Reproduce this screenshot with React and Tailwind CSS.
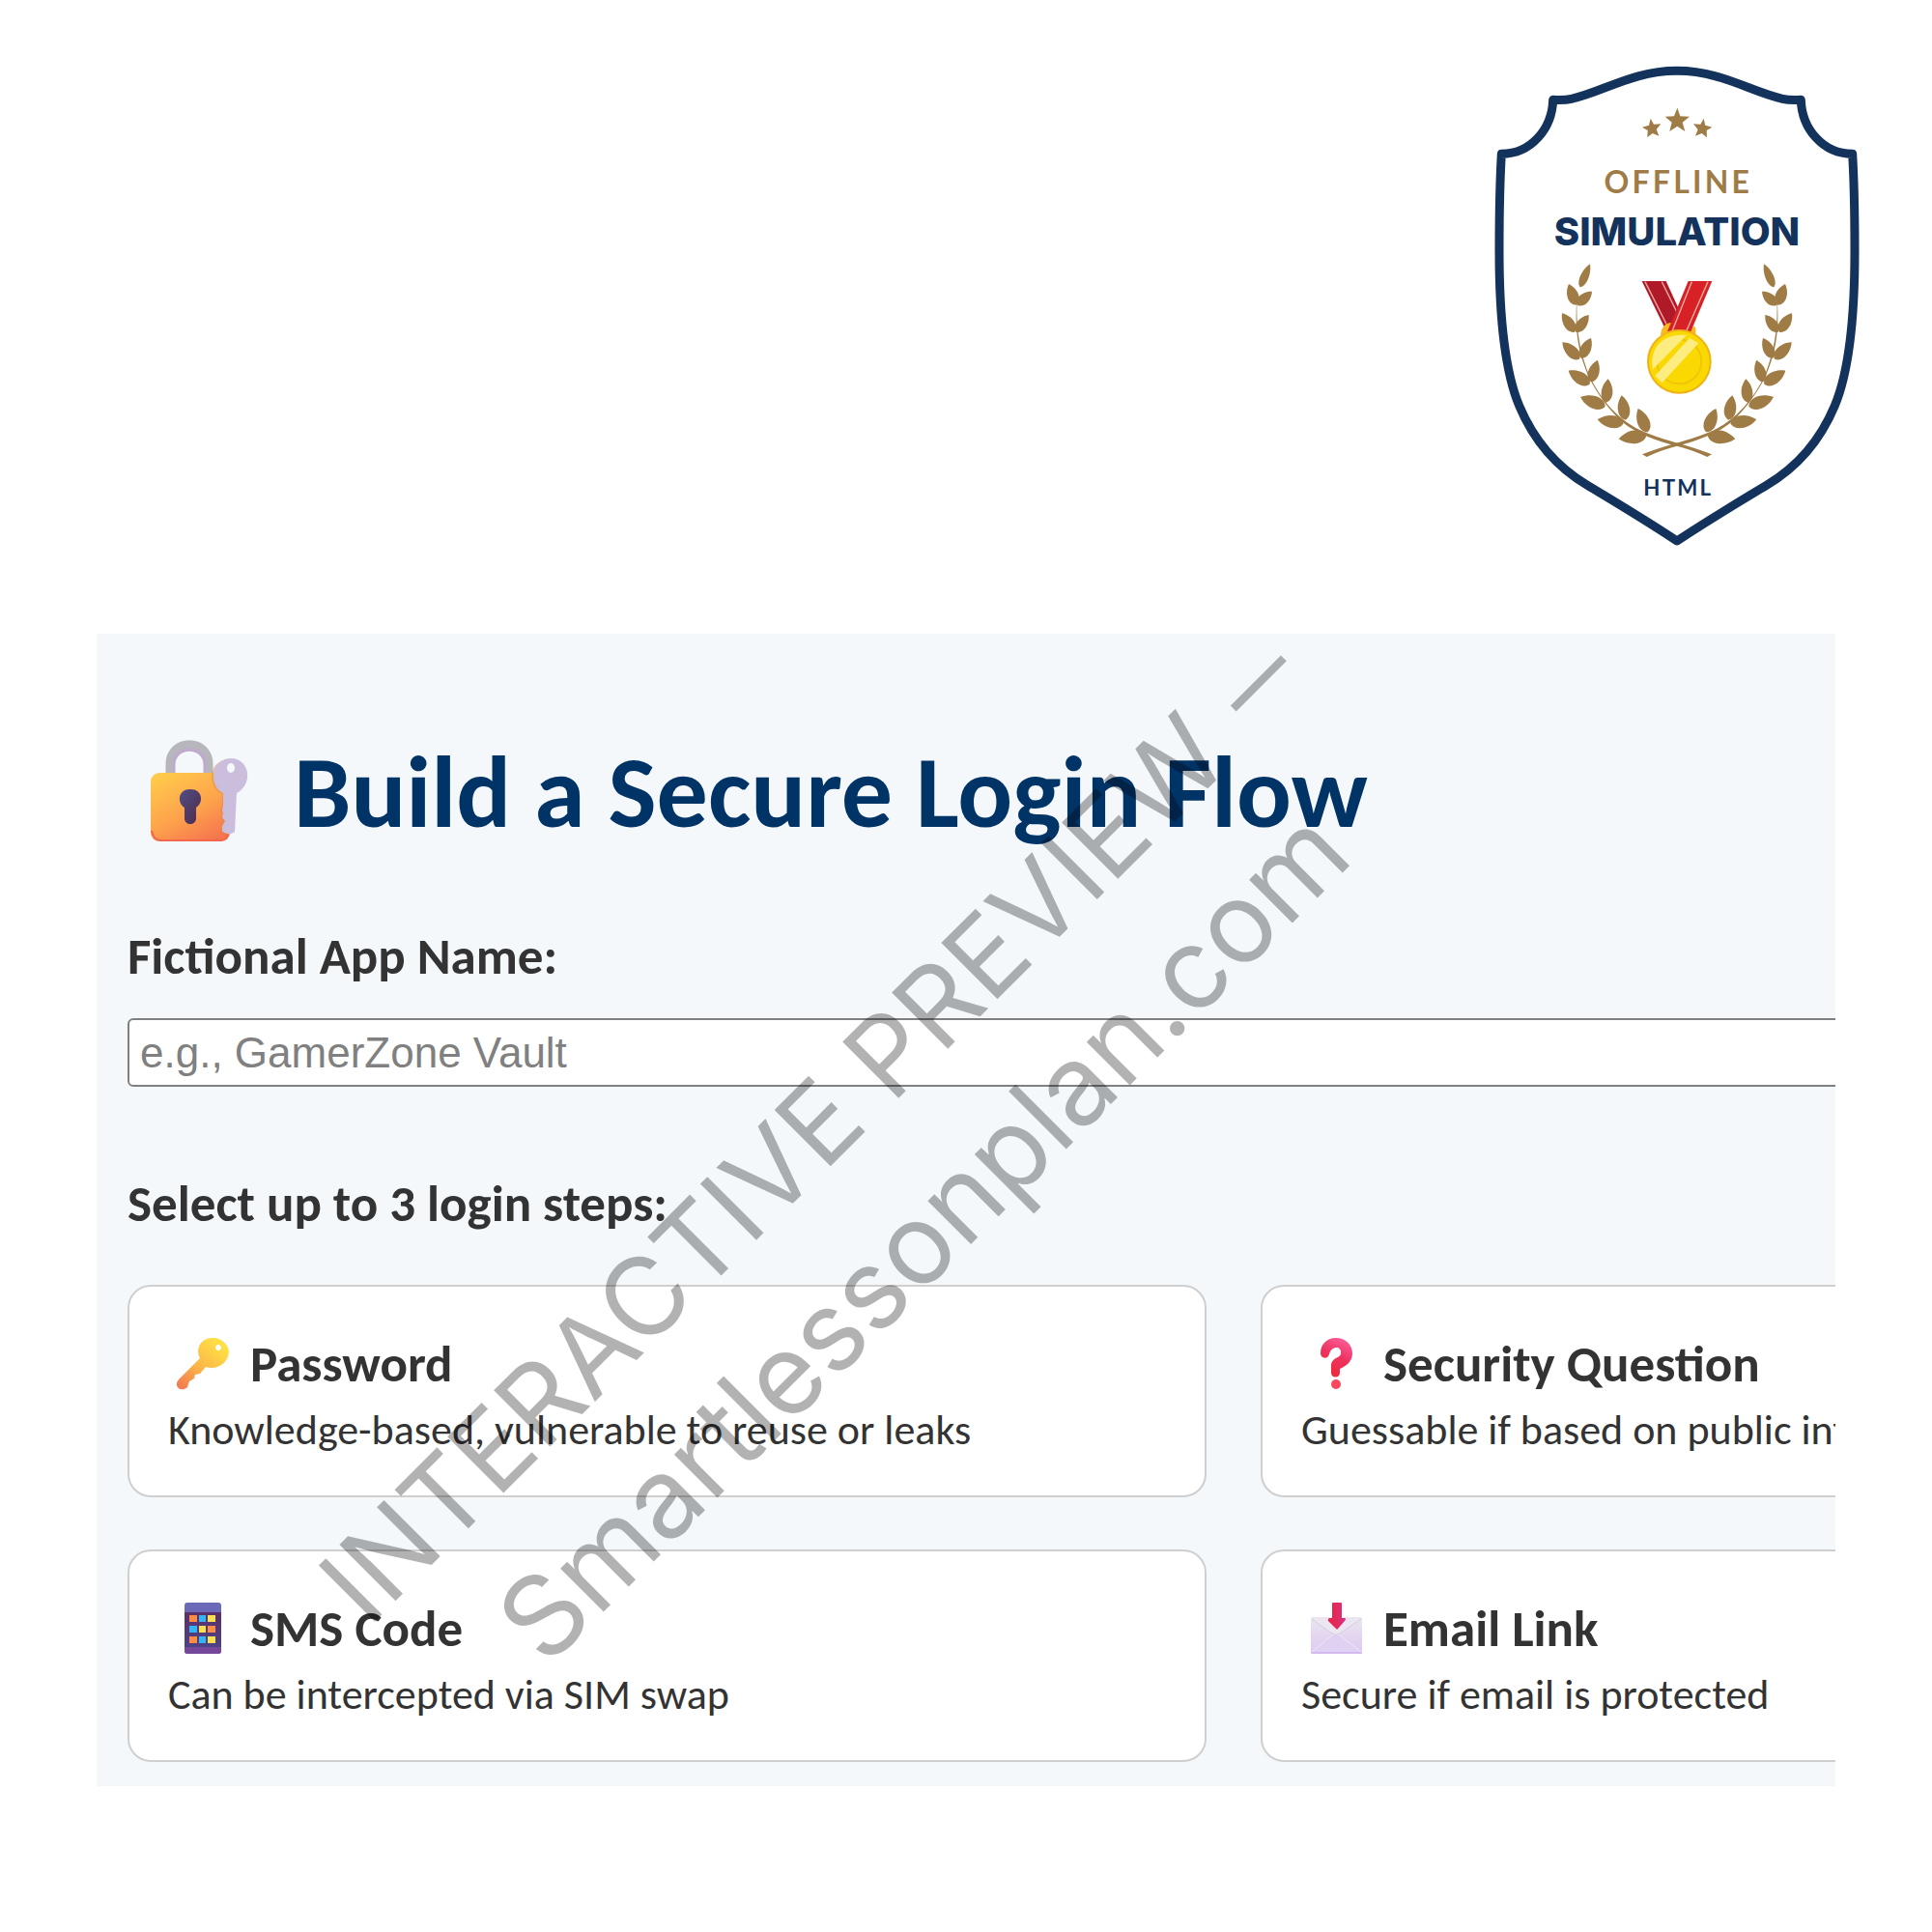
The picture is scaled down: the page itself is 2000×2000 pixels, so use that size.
// Stem point, tip and how far the sides bulge
const leaves = [
  [317, 112, 348, 40, 0.22],
  [305, 167, 282, 102, 0.34],
  [308, 167, 354, 125, 0.34],
  [300, 251, 261, 193, 0.32],
  [304, 251, 344, 198, 0.32],
  [315, 335, 262, 283, 0.32],
  [320, 332, 351, 270, 0.32],
  [347, 413, 281, 371, 0.32],
  [350, 406, 371, 338, 0.32],
  [395, 482, 318, 453, 0.32],
  [398, 470, 404, 397, 0.32],
  [452, 535, 371, 523, 0.32],
  [458, 524, 446, 448, 0.32],
  [523, 572, 437, 583, 0.32],
  [527, 562, 497, 489, 0.32],
];

const leafPath = ([bx, by, tx, ty, bulge]) => {
  const dx = tx - bx;
  const dy = ty - by;
  const point = (along, side) =>
    `${bx + dx * along - dy * side} ${by + dy * along + dx * side}`;
  return `M${bx} ${by} C${point(0.12, bulge)} ${point(0.65, bulge)} ${tx} ${ty} C${point(0.65, -bulge)} ${point(0.12, -bulge)} ${bx} ${by}Z`;
};

const Branch = () => (
  <g fill="#9f7b45">
    {leaves.map((leaf) => (
      <path key={leaf.join("-")} d={leafPath(leaf)} />
    ))}
    <path d="M309 120 C305 200 304 280 345 385 C390 480 455 540 530 567 C560 578 590 588 620 596 C655 606 690 617 726 631 L712 639 C680 624 650 613 618 605 C580 596 500 572 452 533 C395 485 350 410 334 366 C300 280 302 200 309 120Z" />
  </g>
);

const Badge = () => (
  <svg viewBox="0 0 1260 1590" className="w-[420px] h-[530px]" role="img" aria-label="Offline simulation badge">
    <path
      d="M618 70 C480 70 390 135 290 157 C270 162 250 161 233 160 C230 250 165 328 73 328 C67 430 66 520 66 630 C66 820 82 1000 128 1110 C170 1210 240 1298 340 1357 C430 1411 525 1468 618 1530 C711 1468 806 1411 896 1357 C996 1298 1066 1210 1108 1110 C1154 1000 1170 820 1170 630 C1170 520 1169 430 1163 328 C1071 328 1006 250 1003 160 C986 161 966 162 946 157 C846 135 756 70 618 70Z"
      fill="#fff"
      stroke="#13335c"
      strokeWidth="27"
      strokeLinejoin="round"
    />
    <g fill="#9f7b45">
      <path d="M619 185 L628 211 L657 212 L635 230 L643 258 L619 242 L595 258 L602 230 L581 212 L609 211Z" />
      <path d="M536 218 L546 236 L568 235 L554 252 L562 272 L542 264 L526 277 L527 255 L510 245 L531 239Z" />
      <path d="M701 218 L691 236 L669 235 L683 252 L675 272 L695 264 L711 277 L710 255 L727 245 L706 239Z" />
    </g>
    <text x="622" y="449" textAnchor="middle" fontSize="96" className="font-['Lato',sans-serif] font-bold tracking-widest fill-[#9f7b45]">
      OFFLINE
    </text>
    <text x="618" y="612" textAnchor="middle" fontSize="120" className="font-['Inter',sans-serif] font-extrabold fill-[#13335c]">
      SIMULATION
    </text>
    <g transform="translate(0 630)">
      <Branch />
      <g transform="translate(1236 0) scale(-1 1)">
        <Branch />
      </g>

      {/* Medal */}
      <path d="M509 93 L584 93 L640 215 L600 250 L579 236Z" fill="#b01928" />
      <path d="M519 95 L585 226 M571 95 L618 190" stroke="#e8a9a0" strokeWidth="4" />
      <path d="M567 262 C568 236 585 220 604 222 L598 236 L590 250Z M672 232 C678 242 677 254 675 264 L655 250Z" fill="#fbb91c" />
      <path d="M653 93 L727 93 L660 252 L588 250Z" fill="#d82127" />
      <path d="M664 95 L604 246 M714 95 L648 246" stroke="#f3b3a2" strokeWidth="4" />
      <circle cx="625" cy="343" r="97" fill="#fad802" stroke="#efb317" strokeWidth="6" />
      <circle cx="625" cy="343" r="69" fill="none" stroke="#f1c40c" strokeWidth="6" />
      <path d="M543 367 C531 306 570 252 648 261Z" fill="#fdf08f" opacity="0.9" />
      <path d="M657 270 L685 286 L572 409 L550 387Z" fill="#fdf08f" opacity="0.9" />
    </g>
    <text x="622" y="1389" textAnchor="middle" fontSize="67" className="font-['Lato',sans-serif] font-bold tracking-widest fill-[#13335c]">
      HTML
    </text>
  </svg>
);

const LockIcon = () => (
  <svg viewBox="0 0 136 136" className="w-[136px] h-[136px] shrink-0" aria-hidden="true">
    <defs>
      <linearGradient id="lockBody" x1="0.2" y1="0" x2="0.8" y2="1">
        <stop offset="0" stopColor="#ffc94b" />
        <stop offset="0.55" stopColor="#fda24c" />
        <stop offset="1" stopColor="#f5734f" />
      </linearGradient>
      <linearGradient id="lockHole" x1="0" y1="0" x2="1" y2="1">
        <stop offset="0" stopColor="#514e84" />
        <stop offset="1" stopColor="#4e2b4d" />
      </linearGradient>
    </defs>
    <path d="M44 50 V39 C44 12 84 12 84 39 V50" fill="none" stroke="#b7b6bc" strokeWidth="9" />
    <path d="M48 50 V40 C48 19 80 19 80 40 V50" fill="none" stroke="#c0a9cf" strokeWidth="3" />
    <rect x="24" y="48" width="82" height="71" rx="9" fill="url(#lockBody)" />
    <path d="M25 108 Q27 118 34 118 H95 Q102 118 104 112" fill="none" stroke="#f4674f" strokeWidth="2" />
    <path d="M65 65 C52 65 51 79 59 84 V95 C59 103 71 103 71 95 V84 C79 79 78 65 65 65Z" fill="url(#lockHole)" />
    <path
      d="M105 34 C82 35 83 64 98 70 V82 L96 86 L98 90 L96 94 L99 98 L96 103 V108 C99 112 106 112 109 109 L111 69 C130 58 124 33 105 34Z"
      fill="#e28a48"
      opacity="0.5"
    />
    <path
      d="M107 33 C85 34 84 62 99 69 V82 L98 86 L99 90 L98 94 L101 98 L98 103 V108 C101 112 108 112 111 109 L113 69 C131 59 126 33 107 33Z"
      fill="#cbbedd"
    />
    <ellipse cx="107" cy="43" rx="4" ry="5" fill="#f4f8fb" />
  </svg>
);

const KeyIcon = () => (
  <svg viewBox="0 0 72 72" className="w-[72px] h-[72px]" aria-hidden="true">
    <defs>
      <linearGradient id="key" x1="0.8" y1="0.1" x2="0.1" y2="0.95">
        <stop offset="0" stopColor="#ffdf45" />
        <stop offset="0.55" stopColor="#fbb548" />
        <stop offset="1" stopColor="#f37e51" />
      </linearGradient>
    </defs>
    <path
      fillRule="evenodd"
      d="M46 9 C34 9 28 20 33 30 L11 52 C5 59 13 66 20 60 L22 54 L27 51 L28 47 L33 46 L39 39 C50 43 63 35 63 23 C62 15 54 8 46 9Z M52 16 C56 16 56 22 52 22 C48 22 48 16 52 16Z"
      fill="url(#key)"
    />
  </svg>
);

const QuestionIcon = () => (
  <svg viewBox="0 0 72 72" className="w-[72px] h-[72px]" aria-hidden="true">
    <defs>
      <linearGradient id="question" x1="0.8" y1="0" x2="0.4" y2="1">
        <stop offset="0" stopColor="#fb629e" />
        <stop offset="0.5" stopColor="#ee3260" />
        <stop offset="1" stopColor="#ed2a38" />
      </linearGradient>
    </defs>
    <path
      d="M36 9 C26 9 20 16 20 25 C20 31 28 31 29 26 C31 17 42 17 41 25 C41 30 31 29 31 38 V45 C31 51 40 51 40 45 V41 C47 38 53 33 53 25 C53 16 46 9 36 9Z"
      fill="url(#question)"
    />
    <circle cx="36" cy="57" r="5" fill="#fb4660" />
  </svg>
);

const PhoneIcon = () => (
  <svg viewBox="0 0 72 72" className="w-[72px] h-[72px]" aria-hidden="true">
    <defs>
      <linearGradient id="screen" x1="0" y1="0" x2="0" y2="1">
        <stop offset="0" stopColor="#5c3068" />
        <stop offset="1" stopColor="#4d4287" />
      </linearGradient>
    </defs>
    <rect x="17" y="9" width="38" height="53" rx="3" fill="#6c6ab8" />
    <path d="M17 19 H55 V56 H17Z" fill="url(#screen)" />
    <path d="M17 55 H55 V59 Q55 62 52 62 H20 Q17 62 17 59Z" fill="#74479a" />
    <path d="M22 22 h8 v7 h-8Z M41 33 h8 v7 h-8Z M22 44 h8 v7 h-8Z" fill="#fc8b45" />
    <path d="M32 22 h7 v7 h-7Z M22 33 h8 v7 h-8Z M32 44 h7 v7 h-7Z" fill="#35b4f5" />
    <path d="M41 22 h8 v7 h-8Z M32 33 h7 v7 h-7Z M41 44 h8 v7 h-8Z" fill="#f8e050" />
  </svg>
);

const EmailIcon = () => (
  <svg viewBox="1 0 72 72" className="w-[72px] h-[72px]" aria-hidden="true">
    <defs>
      <linearGradient id="envelope" x1="0" y1="0" x2="0" y2="1">
        <stop offset="0" stopColor="#ebe6ef" />
        <stop offset="1" stopColor="#dcc9f0" />
      </linearGradient>
      <linearGradient id="arrow" x1="0" y1="0" x2="1" y2="0">
        <stop offset="0.3" stopColor="#e8264f" />
        <stop offset="1" stopColor="#d03488" />
      </linearGradient>
    </defs>
    <rect x="11" y="24" width="53" height="38" rx="2" fill="url(#envelope)" />
    <path d="M12 60 L33 43 Q37 40 41 43 L63 60" fill="#e0d0f1" stroke="#efe7f8" strokeWidth="1" />
    <path d="M12 26 L33 41 Q37 44 41 41 L63 26" fill="#ece6f1" stroke="#d8cbe3" strokeWidth="1" />
    <path d="M11 60 H64 V61 Q64 62 62 62 H13 Q11 62 11 61Z" fill="#d3b9ef" />
    <path d="M33 10 Q33 9 34 9 H42 Q43 9 43 10 V25 H46 Q48 26 46 28 L39 36 Q38 37 37 36 L29 28 Q28 26 30 25 H33Z" fill="url(#arrow)" />
  </svg>
);

const steps = [
  { title: "Password", text: "Knowledge-based, vulnerable to reuse or leaks", Icon: KeyIcon },
  { title: "Security Question", text: "Guessable if based on public info", Icon: QuestionIcon },
  { title: "SMS Code", text: "Can be intercepted via SIM swap", Icon: PhoneIcon },
  { title: "Email Link", text: "Secure if email is protected", Icon: EmailIcon },
];

const StepCard = ({ title, text, Icon }) => (
  <button type="button" className="rounded-3xl border-2 border-[#cfcfcf] bg-white px-10 py-11 text-left">
    <span className="flex items-center gap-[13px] text-[53px] leading-[72px] font-bold">
      <Icon />
      {title}
    </span>
    <span className="mt-2 block text-[44px] leading-[48px] whitespace-nowrap">{text}</span>
  </button>
);

const App = () => {
  return (
    <main className="min-h-screen bg-white font-['Calibri','Carlito','Lato',sans-serif] text-[#333]">
      <header className="flex justify-end px-[50px] pt-[50px] pb-[76px]">
        <Badge />
      </header>

      <section className="relative mx-[100px] overflow-hidden bg-[#f4f8fb]">
        <div className="w-[129%] pt-24 pb-[25px] pl-8">
          <div className="flex items-center gap-9">
            <LockIcon />
            <h1 className="text-[106px] leading-[120px] font-bold text-[#003366]">
              Build a Secure Login Flow
            </h1>
          </div>

          <label htmlFor="app-name" className="mt-[72px] block text-[53px] leading-[60px] font-bold">
            Fictional App Name:
          </label>
          <input
            id="app-name"
            type="text"
            placeholder="e.g., GamerZone Vault"
            className="mt-[34px] block h-[71px] w-full rounded-md border-2 border-[#808080] bg-white px-[11px] font-['Liberation_Sans',sans-serif] text-[44px] placeholder:text-[#808080]"
          />

          <p className="mt-[91px] text-[53px] leading-[60px] font-bold">Select up to 3 login steps:</p>

          <div className="mt-[54px] grid grid-cols-2 gap-x-14 gap-y-[54px]">
            {steps.map((step) => (
              <StepCard key={step.title} {...step} />
            ))}
          </div>
        </div>

        {/* Watermark */}
        <div className="pointer-events-none absolute top-[567px] left-[799px] -translate-x-1/2 -translate-y-1/2 -rotate-45 text-center font-['Inter',sans-serif] leading-[157px] whitespace-nowrap text-black/30">
          <p className="text-[113px] leading-[157px]">
            INTERACTIVE PREVIEW <span className="font-['Roboto',sans-serif]">—</span>
          </p>
          <p className="text-[116px] leading-[157px]">Smartlessonplan.com</p>
        </div>
      </section>
    </main>
  );
};

export default App;
